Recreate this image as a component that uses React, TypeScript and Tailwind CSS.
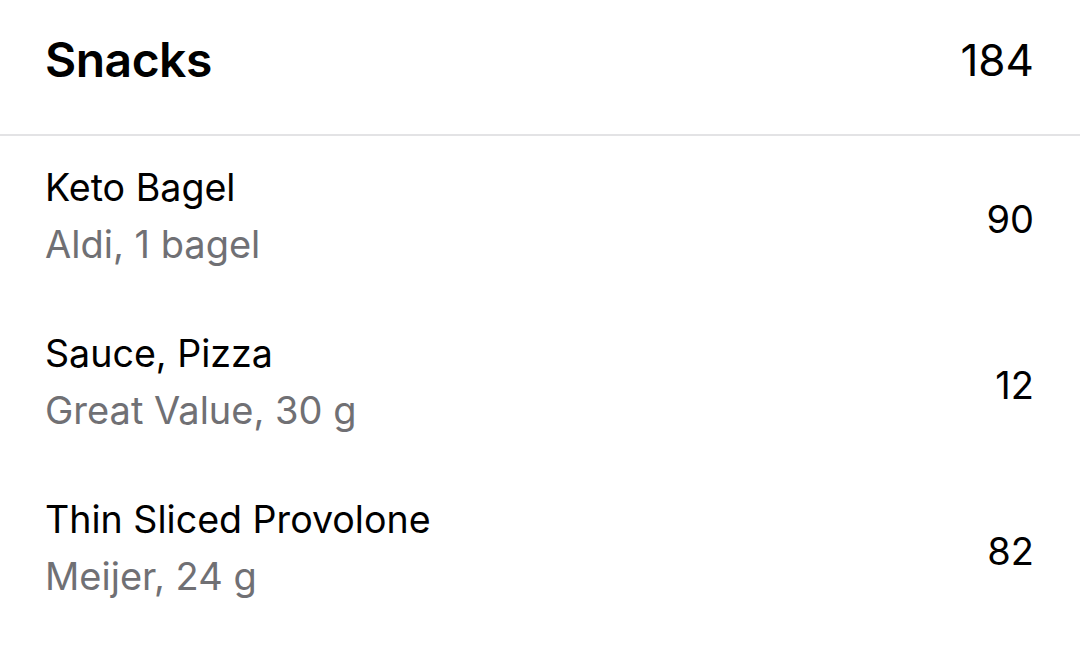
export default function App() {
  const rows = [
    { name: "Keto Bagel", detail: "Aldi, 1 bagel", cal: "90" },
    { name: "Sauce, Pizza", detail: "Great Value, 30 g", cal: "12" },
    { name: "Thin Sliced Provolone", detail: "Meijer, 24 g", cal: "82" },
  ];
  return (
    <div className="w-[1080px] h-[665px] bg-white overflow-hidden font-['Inter',sans-serif] text-black">
      <div className="h-[136px] flex items-center justify-between pl-[45px] pr-[46px] pb-[14px] border-b-2 border-[#e3e3e5]">
        <span className="text-[48px] font-semibold tracking-[-0.5px]">Snacks</span>
        <span className="text-[44px]">184</span>
      </div>
      {rows.map((r) => (
        <div key={r.name} className="h-[166px] flex items-center justify-between pl-[45px] pr-[46px]">
          <div className="flex flex-col mb-[6px]">
            <span className="text-[37.6px] leading-[56px]">{r.name}</span>
            <span className="text-[38px] leading-[56px] text-[#707074]">{r.detail}</span>
          </div>
          <span className="text-[38px]">{r.cal}</span>
        </div>
      ))}
    </div>
  );
}
